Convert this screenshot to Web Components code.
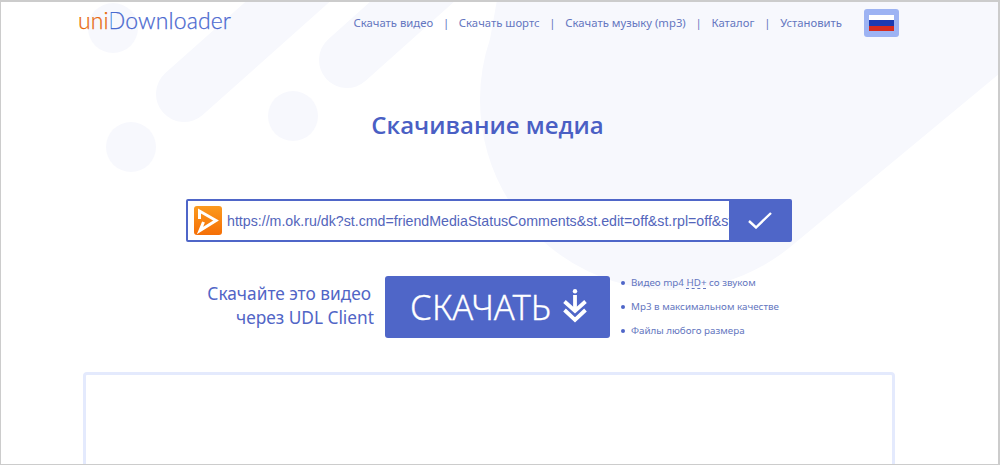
<!DOCTYPE html>
<html lang="ru"><head><meta charset="utf-8"><title>uniDownloader</title>
<style>html,body{margin:0;padding:0;background:#fff;overflow:hidden}</style></head>
<body>
<ud-app>
  <ud-header></ud-header>
  <ud-title>Скачивание медиа</ud-title>
  <ud-search url="https://m.ok.ru/dk?st.cmd=friendMediaStatusComments&st.edit=off&st.rpl=off&st"></ud-search>
  <ud-cta></ud-cta>
  <ud-card></ud-card>
</ud-app>
<script>
const def=(name,html)=>customElements.define(name,class extends HTMLElement{
  connectedCallback(){ if(this.shadowRoot) return; const r=this.attachShadow({mode:'open'}); r.innerHTML=typeof html==='function'?html(this):html; }
});
def('ud-app',`<style>
:host{display:block;position:relative;width:1000px;height:465px;box-sizing:border-box;border:1px solid #ccc;border-top-width:2px;border-right-width:2px;overflow:hidden;background:#fff;font-family:"Noto Sans",sans-serif}
svg{position:absolute;left:-1px;top:-2px;z-index:0}
.c{position:relative;z-index:1;display:flex;flex-direction:column}
</style>
<svg width="1000" height="465" viewBox="0 0 1000 465" fill="#f7f8fd" stroke="none">
<circle cx="113" cy="28" r="25"/><circle cx="293" cy="116" r="25"/><circle cx="131" cy="147" r="25"/>
<path d="M184 94L330 -36M347 60L490 -68" stroke="#f7f8fd" stroke-width="56" stroke-linecap="round"/>
<path d="M670 100m-190 0a190 190 0 0 1 10-61L497 0H1000V73L789 248A190 190 0 0 1 480 100Z"/>
</svg><div class="c"><slot></slot></div>`);
def('ud-header',`<style>
:host{display:flex;align-items:center;justify-content:space-between;height:34px;padding:4px 99px 0 77px}
.logo{font:300 23px/28px Lato,sans-serif;color:#4a68cf;display:flex;letter-spacing:.1px;margin-top:-6px;-webkit-text-stroke:.25px currentColor}
.u{color:#e8690f}
.d{display:inline-block;clip-path:inset(0 0 0 3px);margin-left:-1px}
nav{display:flex;align-items:center;gap:9.75px;margin-left:auto;font:11.3px/16px "Noto Sans",sans-serif;color:#6476c0;margin-right:22px}
nav i{font-style:normal;color:#6476c0}
.flag{width:35px;height:28px;box-sizing:border-box;padding:6px 5px;border-radius:3px;background:#9db3f3;display:flex;flex-direction:column}
.flag b{flex:1;display:block}
</style>
<div class="logo"><span class="u">uni</span><span class="d">D</span><span>ownloader</span></div>
<nav><span>Скачать видео</span><i>|</i><span>Скачать шортс</span><i>|</i><span>Скачать музыку (mp3)</span><i>|</i><span>Каталог</span><i>|</i><span>Установить</span></nav>
<div class="flag"><b style="background:#fff"></b><b style="background:#1c3ab0"></b><b style="background:#d52b1e"></b></div>`);
def('ud-title',`<style>
:host{display:block;text-align:center;margin-top:65px;height:40px;font:600 24px/40px "Open Sans",sans-serif;color:#4a5fc4;padding-right:24px}
</style><slot></slot>`);
def('ud-search',el=>`<style>
:host{display:flex;width:606px;height:43px;box-sizing:border-box;margin:54px 0 0 185px;border:2px solid #4f66c8;border-radius:2px;background:#fff;overflow:hidden}
svg.i{flex:none;margin:5px 0 0 6px}
.t{flex:1;min-width:0;overflow:hidden;white-space:nowrap;margin-left:5px;font:14.2px/41px "Liberation Sans",sans-serif;color:#5365bb}
.b{flex:none;width:61px;background:#4f66c8;display:flex;align-items:center;justify-content:center}
</style>
<svg class="i" width="28" height="29" viewBox="0 0 28 29"><defs><linearGradient id="g" x1="0" y1="0" x2="0" y2="1"><stop offset="0" stop-color="#fb9a1e"/><stop offset="1" stop-color="#f56f06"/></linearGradient></defs><rect width="28" height="29" rx="3" fill="url(#g)"/><path d="M5.5 13V5L22 14.5L6 24.5L9.5 16" fill="none" stroke="#fff" stroke-width="3"/></svg>
<div class="t">${el.getAttribute('url').replace(/&/g,'&amp;')}</div>
<div class="b"><svg width="24" height="17" viewBox="0 0 24 17"><path d="M1 9L8 15.5L23 1" fill="none" stroke="#fff" stroke-width="2.4"/></svg></div>`);
def('ud-cta',`<style>
:host{display:flex;align-items:flex-start;height:62px;margin-top:34px;padding-left:180px}
.l{width:193px;text-align:right;font:17.3px/24px "Noto Sans",sans-serif;color:#5165c6;padding-top:6px}
.l span{display:block}.l span:first-child{padding-right:3px}
.btn{margin-left:11px;width:225px;height:62px;box-sizing:border-box;border-radius:3px;background:#4f66c8;color:#fff;display:flex;align-items:center;padding:0 0 0 25px;gap:12px;font:300 34.5px/62px "Noto Sans",sans-serif;-webkit-text-stroke:.3px #fff}
.btn svg{margin-top:-2px}
ul{list-style:none;margin:-5px 0 0 11px;padding:0;font:9.8px/24px "Noto Sans",sans-serif;color:#6476c0}
li{display:flex;align-items:center;gap:6px}
li::before{content:"";width:4px;height:4px;border-radius:50%;background:#4f66c8}
abbr{text-decoration:underline dashed;text-underline-offset:2px}
</style>
<div class="l"><span>Скачайте это видео</span><span>через UDL Client</span></div>
<div class="btn"><span>СКАЧАТЬ</span><svg width="24" height="34" viewBox="0 0 24 34"><g fill="none" stroke="#fff" stroke-width="3.8"><path d="M12 6V21"/><path d="M1.5 12.5L12 22L22.5 12.5"/><path d="M1.5 21L12 31L22.5 21"/></g><circle cx="12" cy="2.2" r="2.2" fill="#fff"/></svg></div>
<ul><li><span>Видео mp4 <abbr>HD+</abbr> со звуком</span></li><li><span>Mp3 в максимальном качестве</span></li><li><span>Файлы любого размера</span></li></ul>`);
def('ud-card',`<style>
:host{display:block;width:812px;height:140px;box-sizing:border-box;margin:34px 0 0 82px;border:3px solid #e4eafd;border-radius:4px;background:#fff}
</style>`);
</script>
</body></html>
